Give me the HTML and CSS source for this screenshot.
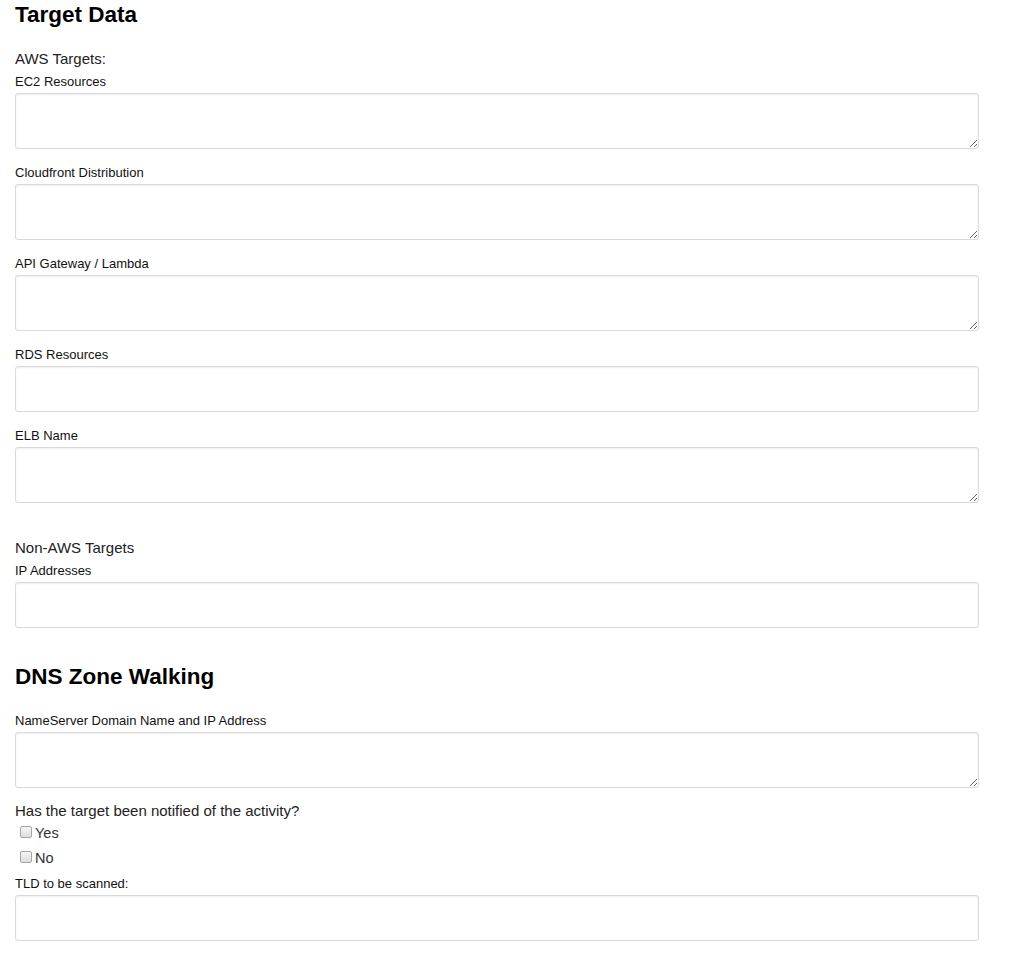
FILE: index.html
```html
<!DOCTYPE html>
<html lang="en">
<head>
<meta charset="utf-8">
<title>Target Data</title>
<link rel="stylesheet" href="styles.css">
</head>
<body>
<form class="page">
  <h2 class="title">Target Data</h2>
  <div class="section">
    <div class="group-title">AWS Targets:</div>
    <div class="field">
      <label class="label">EC2 Resources</label>
      <textarea class="control area"></textarea>
    </div>
    <div class="field">
      <label class="label">Cloudfront Distribution</label>
      <textarea class="control area"></textarea>
    </div>
    <div class="field">
      <label class="label">API Gateway / Lambda</label>
      <textarea class="control area"></textarea>
    </div>
    <div class="field">
      <label class="label">RDS Resources</label>
      <input class="control line" type="text">
    </div>
    <div class="field">
      <label class="label">ELB Name</label>
      <textarea class="control area"></textarea>
    </div>
  </div>
  <div class="section second">
    <div class="group-title">Non-AWS Targets</div>
    <div class="field">
      <label class="label">IP Addresses</label>
      <input class="control line" type="text">
    </div>
  </div>
  <h2 class="title dns">DNS Zone Walking</h2>
  <div class="field">
    <label class="label">NameServer Domain Name and IP Address</label>
    <textarea class="control area"></textarea>
  </div>
  <div class="question">Has the target been notified of the activity?</div>
  <label class="check-row"><input class="check" type="checkbox"><span>Yes</span></label>
  <label class="check-row"><input class="check" type="checkbox"><span>No</span></label>
  <div class="field tld">
    <label class="label">TLD to be scanned:</label>
    <input class="control line" type="text">
  </div>
</form>
</body>
</html>
```
FILE: styles.css
```css
html, body {
  margin: 0;
  padding: 0;
  background: #fff;
}
body {
  font-family: "Liberation Sans", Arial, sans-serif;
  color: #222;
}
.page {
  width: 964px;
  padding-left: 15px;
  display: flex;
  flex-direction: column;
}
.title {
  margin: 3px 0 0;
  font-size: 22.5px;
  line-height: 24px;
  font-weight: bold;
  color: #000;
}
.dns {
  margin-top: 23px;
  margin-bottom: 22px;
}
.section {
  margin-top: 21px;
  display: flex;
  flex-direction: column;
}
.section.second {
  margin-top: 20px;
}
.group-title {
  font-size: 15px;
  line-height: 20px;
  padding-top: 1px;
  color: #222;
  margin-bottom: 3px;
}
.field {
  display: flex;
  flex-direction: column;
  margin-bottom: 14px;
}
.label {
  font-size: 13px;
  line-height: 18px;
  padding-top: 1px;
  margin-bottom: 2px;
  color: #111;
}
.control {
  box-sizing: border-box;
  width: 964px;
  margin: 0;
  border: 1px solid #d9d9d9;
  border-radius: 3px;
  background: #fff;
  box-shadow: inset 0 1px 2px rgba(0, 0, 0, 0.07);
  font-family: inherit;
  font-size: 14px;
  padding: 6px 10px;
  outline: none;
}
.area {
  height: 56px;
  resize: vertical;
  display: block;
}
.line {
  height: 46px;
  display: block;
}
.question {
  margin-top: -2px;
  padding-top: 2px;
  font-size: 15px;
  line-height: 18px;
  color: #222;
}
.check-row {
  display: flex;
  align-items: center;
  height: 25px;
  font-size: 14.5px;
  color: #333;
}
.check {
  appearance: none;
  -webkit-appearance: none;
  width: 12px;
  height: 12px;
  margin: 0 3px 0 5px;
  border: 1px solid #a6a6a6;
  border-radius: 2px;
  background: linear-gradient(#f4f4f4, #dedede);
  position: relative;
  top: -1px;
}
.tld {
  margin-top: 4px;
}
```
